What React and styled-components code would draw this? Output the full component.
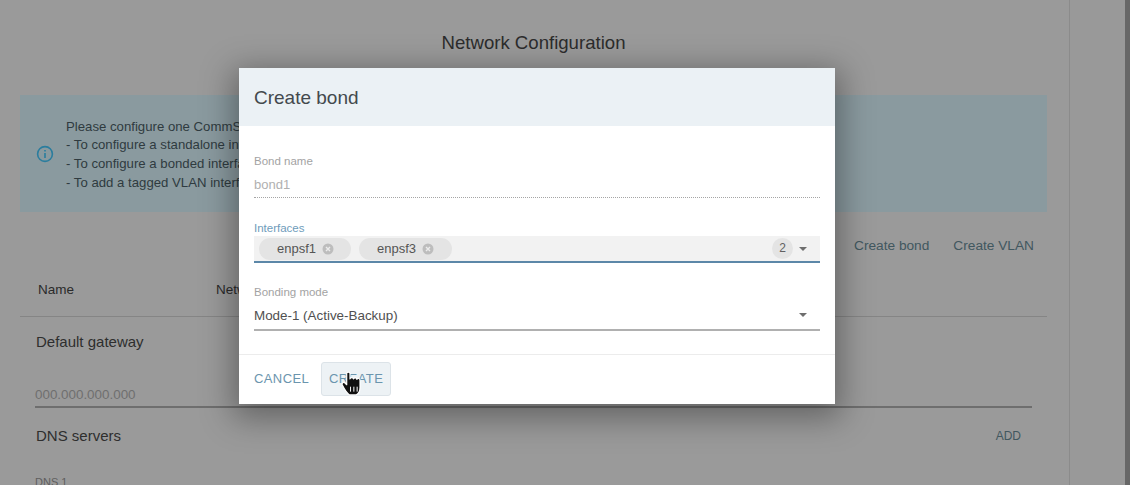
import React from 'react';
import styled, { createGlobalStyle } from 'styled-components';

const GlobalStyle = createGlobalStyle`
  html, body {
    margin: 0;
    padding: 0;
    height: 485px;
    overflow: hidden;
    background: #9a9a9a;
    font-family: "Liberation Sans", Arial, sans-serif;
  }
`;

const Page = styled.div`
  position: relative;
  display: flex;
  width: 1130px;
  height: 485px;
  overflow: hidden;
  background: #9a9a9a;
`;

const Main = styled.main`
  width: 1070px;
  flex: none;
  box-sizing: border-box;
  padding: 0 22px 0 20px;
  border-right: 1px solid #8b8b8b;
`;

const SidePanel = styled.aside`
  flex: 1;
  background: #999;
`;

const Edge = styled.div`
  width: 5px;
  flex: none;
  background: #676767;
`;

const PageTitle = styled.h1`
  margin: 0;
  padding-top: 32px;
  height: 95px;
  box-sizing: border-box;
  font-size: 18.6px;
  line-height: 21px;
  font-weight: 400;
  color: #2c2c2c;
  text-align: center;
`;

const Alert = styled.div`
  display: flex;
  align-items: center;
  width: 1027px;
  height: 117px;
  box-sizing: border-box;
  padding-left: 16px;
  gap: 12px;
  background: #8a9a9f;
  color: #2f3b40;
  font-size: 13.2px;
  line-height: 18.7px;
  white-space: nowrap;
`;

const AlertText = styled.div`
  padding-top: 3px;
`;

const InfoIcon = styled.svg`
  width: 18px;
  height: 18px;
  flex: none;
  color: #2a7d9e;
`;

const ActionRow = styled.div`
  display: flex;
  justify-content: flex-end;
  gap: 24px;
  padding: 26px 13px 0 0;
  height: 44px;
  box-sizing: border-box;
  font-size: 13.7px;
  line-height: 15px;
  color: #41575f;
`;

const TableHead = styled.div`
  display: flex;
  height: 61px;
  box-sizing: border-box;
  width: 1027px;
  padding: 26px 0 0 18px;
  border-bottom: 1px solid #858585;
  font-size: 13.5px;
  line-height: 15px;
  color: #2a2a2a;
`;

const HeadCell = styled.span`
  width: ${({ $width }) => $width}px;
`;

const Section = styled.div`
  width: 997px;
  margin-left: 15px;
`;

const SectionTitle = styled.h2`
  margin: 0;
  padding-left: 1px;
  font-size: 15px;
  line-height: 18px;
  font-weight: 400;
  color: #2e2e2e;
`;

const GatewayTitle = styled(SectionTitle)`
  padding-top: 16px;
`;

const GatewayInput = styled.div`
  margin-top: 37px;
  height: 20px;
  box-sizing: border-box;
  border-bottom: 2px solid #6e6e6e;
  font-size: 13.4px;
  line-height: 13px;
  color: #6f6f6f;
`;

const DnsHead = styled.div`
  display: flex;
  justify-content: space-between;
  align-items: center;
  padding: 19px 11px 0 0;
`;

const AddLabel = styled.span`
  font-size: 12px;
  line-height: 14px;
  color: #41575f;
`;

const DnsLabel = styled.div`
  margin-top: 31px;
  font-size: 11px;
  line-height: 12px;
  color: #5e5e5e;
`;

const Dialog = styled.div`
  position: absolute;
  left: 239px;
  top: 68px;
  width: 596px;
  height: 336px;
  background: #fff;
  box-shadow: 0 8px 30px 6px rgba(0, 0, 0, 0.35);
  display: flex;
  flex-direction: column;
`;

const DialogHeader = styled.header`
  height: 58px;
  flex: none;
  box-sizing: border-box;
  padding: 19px 15px 0;
  background: #ebf1f5;
  font-size: 19px;
  line-height: 21px;
  color: #43494d;
`;

const DialogBody = styled.div`
  flex: 1;
  padding: 0 15px;
`;

const Field = styled.div`
  margin-top: ${({ $top }) => $top}px;
`;

const FieldLabel = styled.div`
  font-size: 11.5px;
  line-height: 12px;
  color: ${({ $active }) => ($active ? '#6f9cbb' : '#a3a3a3')};
`;

const DisabledValue = styled.div`
  margin-top: 10px;
  height: 21px;
  box-sizing: border-box;
  border-bottom: 1px dotted #a5a5a5;
  font-size: 13px;
  line-height: 15px;
  color: #b0b0b0;
`;

const ChipSelect = styled.div`
  display: flex;
  align-items: center;
  height: 27px;
  margin-top: 2px;
  box-sizing: border-box;
  padding: 0 13px 0 5px;
  gap: 8px;
  background: #f2f2f2;
  border-bottom: 2px solid #5c87a8;
`;

const Chip = styled.span`
  display: inline-flex;
  align-items: center;
  gap: 6px;
  height: 22px;
  width: ${({ $width }) => $width}px;
  box-sizing: border-box;
  padding-left: 18px;
  border-radius: 11px;
  background: #e4e4e4;
  font-size: 13px;
  color: #555;
`;

const ChipClose = styled.svg`
  width: 12px;
  height: 12px;
  flex: none;
`;

const CountBadge = styled.span`
  margin-left: auto;
  width: 21px;
  height: 21px;
  margin-right: -2px;
  border-radius: 50%;
  background: #e4e4e4;
  font-size: 12px;
  line-height: 21px;
  text-align: center;
  color: #606060;
`;

const Caret = styled.span`
  width: 0;
  height: 0;
  border-left: 4px solid transparent;
  border-right: 4px solid transparent;
  border-top: 4px solid #6e6e6e;
`;

const ModeSelect = styled.div`
  display: flex;
  align-items: center;
  justify-content: space-between;
  height: 30px;
  margin-top: 3px;
  box-sizing: border-box;
  padding: 0 13px 0 0;
  border-bottom: 2px solid #b0b0b0;
  font-size: 13.4px;
  color: #505050;
`;

const DialogFooter = styled.footer`
  display: flex;
  align-items: center;
  height: 50px;
  flex: none;
  box-sizing: border-box;
  padding: 0 0 2px 15px;
  gap: 12px;
  border-top: 1px solid #ececec;
`;

const FooterButton = styled.button`
  height: 34px;
  width: ${({ $primary }) => ($primary ? '70px' : 'auto')};
  padding: 0;
  box-sizing: border-box;
  border: ${({ $primary }) => ($primary ? '1px solid #dce3e8' : 'none')};
  border-radius: 3px;
  background: ${({ $primary }) => ($primary ? '#edf2f5' : 'transparent')};
  font: inherit;
  font-size: 13px;
  letter-spacing: 0.4px;
  color: #6b95ae;
`;

const HandCursor = styled.svg`
  position: absolute;
  left: 339px;
  top: 368px;
  width: 26.4px;
  height: 28.6px;
`;

function ChipX() {
  return (
    <ChipClose viewBox="0 0 12 12">
      <circle cx="6" cy="6" r="5.5" fill="#bdbdbd" />
      <path d="M4 4l4 4M8 4l-4 4" stroke="#ececec" strokeWidth="1.4" />
    </ChipClose>
  );
}

export default function App() {
  return (
    <>
      <GlobalStyle />
      <Page>
        <Main>
          <PageTitle>Network Configuration</PageTitle>
          <Alert>
            <InfoIcon viewBox="0 0 18 18" fill="none" stroke="currentColor" strokeWidth="1.6">
              <circle cx="9" cy="9" r="7.4" />
              <path d="M9 8v5M9 5v1.6" />
            </InfoIcon>
            <AlertText>
              Please configure one CommServe network interface
              <br />- To configure a standalone interface
              <br />- To configure a bonded interface
              <br />- To add a tagged VLAN interface
            </AlertText>
          </Alert>
          <ActionRow>
            <span>Create bond</span>
            <span>Create VLAN</span>
          </ActionRow>
          <TableHead>
            <HeadCell $width={178}>Name</HeadCell>
            <HeadCell $width={200}>Network</HeadCell>
          </TableHead>
          <Section>
            <GatewayTitle>Default gateway</GatewayTitle>
            <GatewayInput>000.000.000.000</GatewayInput>
            <DnsHead>
              <SectionTitle>DNS servers</SectionTitle>
              <AddLabel>ADD</AddLabel>
            </DnsHead>
            <DnsLabel>DNS 1</DnsLabel>
          </Section>
        </Main>
        <SidePanel />
        <Edge />

        <Dialog>
          <DialogHeader>Create bond</DialogHeader>
          <DialogBody>
            <Field $top={29}>
              <FieldLabel>Bond name</FieldLabel>
              <DisabledValue>bond1</DisabledValue>
            </Field>
            <Field $top={24}>
              <FieldLabel $active>Interfaces</FieldLabel>
              <ChipSelect>
                <Chip $width={92}>enpsf1<ChipX /></Chip>
                <Chip $width={93}>enpsf3<ChipX /></Chip>
                <CountBadge>2</CountBadge>
                <Caret />
              </ChipSelect>
            </Field>
            <Field $top={23}>
              <FieldLabel>Bonding mode</FieldLabel>
              <ModeSelect>
                Mode-1 (Active-Backup)
                <Caret />
              </ModeSelect>
            </Field>
          </DialogBody>
          <DialogFooter>
            <FooterButton>CANCEL</FooterButton>
            <FooterButton $primary>CREATE</FooterButton>
          </DialogFooter>
        </Dialog>

        <HandCursor viewBox="0 0 24 26">
          <path
            d="M7 5c0-1.6 3-1.6 3 0V10c.3-1.6 3-1.6 3.2 0 .3-1.4 2.9-1.4 3.1.3.4-1.2 2.8-1 2.8.8V18c0 3-1.6 5.6-3.5 6.5H9.5C7.5 23 5 19.5 3 15.5c-.8-1.8 1.2-3 2.5-1.8L7 15.2V5z"
            fill="#111"
            stroke="#fff"
            strokeWidth="1.1"
            strokeLinejoin="round"
          />
          <path d="M10.5 17v4.5M13.5 17v4.5M16.5 17v4.5" stroke="#fff" strokeWidth="0.9" />
        </HandCursor>
      </Page>
    </>
  );
}
